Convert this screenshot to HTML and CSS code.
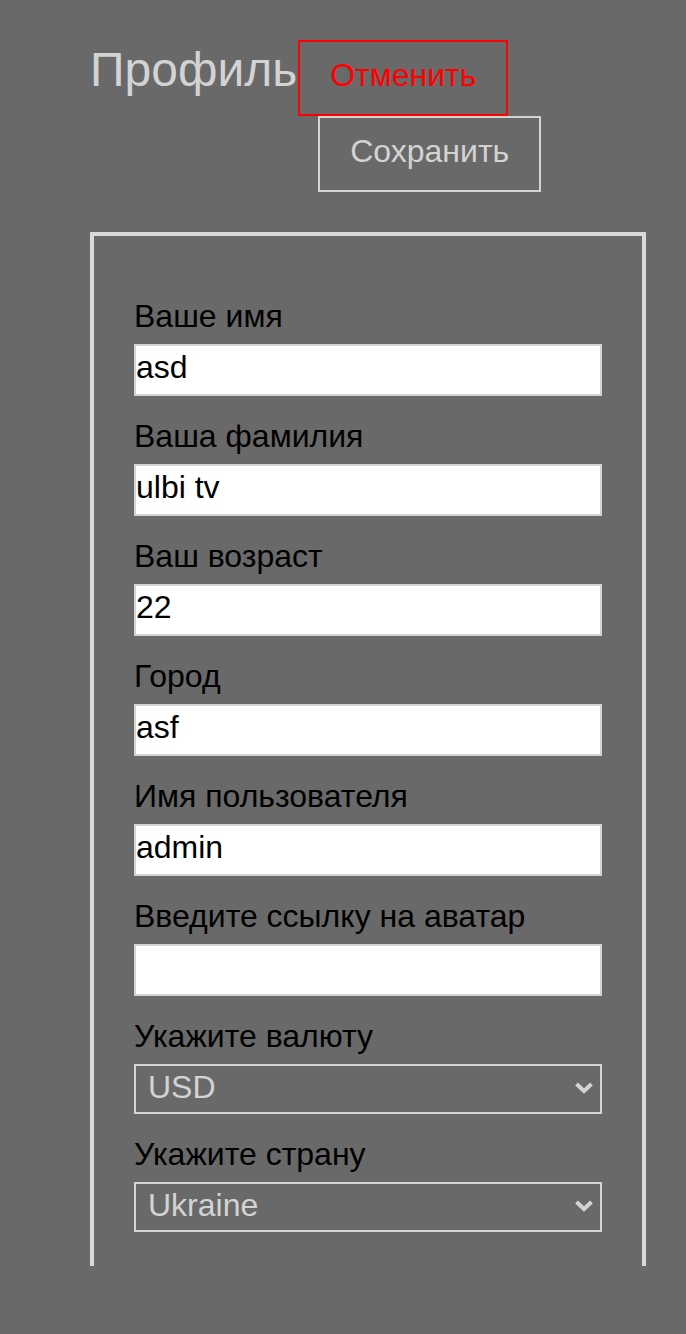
FILE: index.html
```html
<!DOCTYPE html>
<html lang="ru">
<head>
<meta charset="utf-8">
<title>Профиль</title>
<link rel="stylesheet" href="styles.css">
</head>
<body>
<div class="page">
  <header class="header">
    <h1 class="title">Профиль</h1>
    <div class="actions">
      <button class="btn btn-cancel">Отменить</button>
      <button class="btn btn-save">Сохранить</button>
    </div>
  </header>
  <div class="card">
    <div class="field">
      <label class="label">Ваше имя</label>
      <input class="input" type="text" value="asd">
    </div>
    <div class="field">
      <label class="label">Ваша фамилия</label>
      <input class="input" type="text" value="ulbi tv">
    </div>
    <div class="field">
      <label class="label">Ваш возраст</label>
      <input class="input" type="text" value="22">
    </div>
    <div class="field">
      <label class="label">Город</label>
      <input class="input" type="text" value="asf">
    </div>
    <div class="field">
      <label class="label">Имя пользователя</label>
      <input class="input" type="text" value="admin">
    </div>
    <div class="field">
      <label class="label">Введите ссылку на аватар</label>
      <input class="input" type="text" value="">
    </div>
    <div class="field field-select">
      <label class="label">Укажите валюту</label>
      <div class="select-wrap">
        <select class="select">
          <option>USD</option>
          <option>EUR</option>
          <option>RUB</option>
        </select>
        <svg class="chevron" width="20" height="14" viewBox="0 0 20 14"><path d="M2.5 3 L10 10 L17.5 3" fill="none" stroke="#d3d3d3" stroke-width="4"/></svg>
      </div>
    </div>
    <div class="field field-select">
      <label class="label">Укажите страну</label>
      <div class="select-wrap">
        <select class="select">
          <option>Ukraine</option>
          <option>Russia</option>
          <option>Belarus</option>
        </select>
        <svg class="chevron" width="20" height="14" viewBox="0 0 20 14"><path d="M2.5 3 L10 10 L17.5 3" fill="none" stroke="#d3d3d3" stroke-width="4"/></svg>
      </div>
    </div>
  </div>
</div>
</body>
</html>
```

FILE: styles.css
```css
html, body {
  margin: 0;
  padding: 0;
  background: #696969;
  font-family: "Liberation Sans", Arial, sans-serif;
}

.page {
  padding: 40px 40px 0 90px;
}

.header {
  display: flex;
  align-items: baseline;
}

.title {
  margin: 0;
  font-size: 48px;
  font-weight: normal;
  line-height: normal;
  color: #d3d3d3;
}

.actions {
  display: flex;
  flex-direction: column;
  align-items: flex-start;
  margin-left: 1px;
}

.btn {
  font-family: "Liberation Sans", Arial, sans-serif;
  font-size: 32px;
  line-height: normal;
  background: transparent;
  padding: 15px 30px 20px;
  margin: 0;
  cursor: pointer;
}

.btn-cancel {
  border: 2px solid #ff0000;
  color: #ff0000;
}

.btn-save {
  border: 2px solid #d3d3d3;
  color: #d3d3d3;
  margin-left: 20px;
}

.card {
  margin-top: 40px;
  border: 4px solid #d9d9d9;
  border-bottom: none;
  padding: 62px 40px 34px;
  display: flex;
  flex-direction: column;
  gap: 22px;
}

.field {
  display: flex;
  flex-direction: column;
}

.label {
  font-size: 32px;
  line-height: normal;
  color: #000;
  margin-bottom: 9px;
}

.input {
  box-sizing: border-box;
  height: 52px;
  width: 100%;
  border: 2px solid #d3d3d3;
  background: #fff;
  padding: 0 0 6px 0;
  margin: 0;
  font-family: "Liberation Sans", Arial, sans-serif;
  font-size: 32px;
  color: #000;
  outline: none;
}

.select-wrap {
  position: relative;
}

.select {
  box-sizing: border-box;
  width: 100%;
  height: 50px;
  border: 2px solid #d3d3d3;
  background: transparent;
  color: #d3d3d3;
  font-family: "Liberation Sans", Arial, sans-serif;
  font-size: 32px;
  padding: 0 0 4px 12px;
  margin: 0;
  appearance: none;
  -webkit-appearance: none;
  border-radius: 0;
  outline: none;
}

.chevron {
  position: absolute;
  right: 8px;
  top: 17px;
  pointer-events: none;
}
```
